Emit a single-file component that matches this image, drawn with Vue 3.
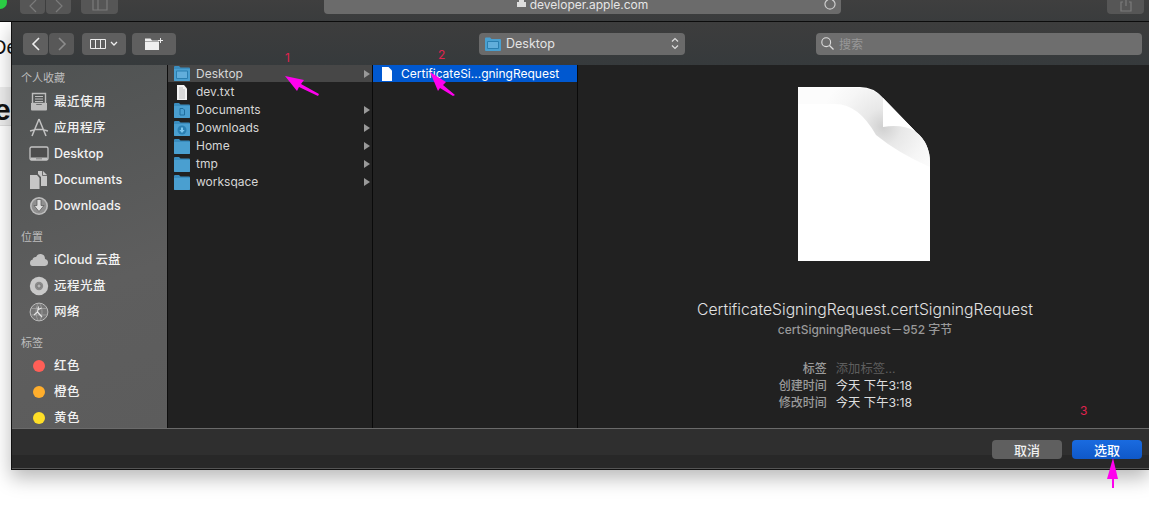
<script setup>
const favorites = [
  { icon: 'recent', label: '最近使用', cjk: true },
  { icon: 'apps', label: '应用程序', cjk: true },
  { icon: 'desktop', label: 'Desktop' },
  { icon: 'docs', label: 'Documents' },
  { icon: 'down', label: 'Downloads' },
]
const places = [
  { icon: 'cloud', label: 'iCloud 云盘' },
  { icon: 'disc', label: '远程光盘', cjk: true },
  { icon: 'net', label: '网络', cjk: true },
]
const tags = [
  { color: '#ff5f57', label: '红色' },
  { color: '#ffae2c', label: '橙色' },
  { color: '#ffdf27', label: '黄色' },
]
const files = [
  { name: 'Desktop', kind: 'desktop', more: true, active: true },
  { name: 'dev.txt', kind: 'txt' },
  { name: 'Documents', kind: 'doc', more: true },
  { name: 'Downloads', kind: 'down', more: true },
  { name: 'Home', kind: 'plain', more: true },
  { name: 'tmp', kind: 'plain', more: true },
  { name: 'worksqace', kind: 'plain', more: true },
]
const meta = [
  { key: '标签', value: '添加标签...', dim: true },
  { key: '创建时间', value: '今天 下午3:18' },
  { key: '修改时间', value: '今天 下午3:18' },
]
</script>

<template>
  <div class="screen">
    <!-- safari behind the sheet -->
    <header class="browser">
      <span class="dot"></span>
      <div class="b-group">
        <span class="b-btn"><svg width="10" height="14" viewBox="0 0 10 14"><path d="M8 0 2 6l6 6" class="glyph" /></svg></span>
        <span class="b-btn"><svg width="10" height="14" viewBox="0 0 10 14"><path d="m2 0 6 6-6 6" class="glyph" /></svg></span>
      </div>
      <span class="b-btn side"><svg width="16" height="14" viewBox="0 0 16 14"><path d="M1 0v10h14V0M6 0v10" class="glyph" /></svg></span>
      <div class="url">
        <svg width="9" height="10" viewBox="0 0 9 10"><path d="M0 4h9v5H0zM2 4V1h5v3" fill="#ddd" /></svg>
        <span>developer.apple.com</span>
        <svg class="reload" width="14" height="14" viewBox="0 0 14 14"><path d="M9 1.600a5 5 0 1 1-4 0" fill="none" stroke="#ccc" stroke-width="1.200" /></svg>
      </div>
      <span class="b-btn share"><svg width="12" height="14" viewBox="0 0 12 14"><path d="M3 2H1v9h10V2H9M6 0v6" class="glyph" /></svg></span>
    </header>

    <div class="stage">
      <div class="page-strip">
        <span class="page-a">De</span>
        <div class="page-band"><span>e</span></div>
      </div>

      <section class="dialog">
        <div class="toolbar">
          <div class="nav">
            <button class="tool back"><svg width="10" height="16" viewBox="0 0 10 16"><path d="M8 2 2 8l6 6" fill="none" stroke="#eee" stroke-width="1.600" /></svg></button>
            <button class="tool fwd"><svg width="10" height="16" viewBox="0 0 10 16"><path d="m2 2 6 6-6 6" fill="none" stroke="#8c8c8c" stroke-width="1.600" /></svg></button>
          </div>
          <button class="tool view">
            <svg width="16" height="10" viewBox="0 0 16 10"><path d="M.5.500h15v9H.5zM5.500.500v9M10.500.500v9" fill="none" stroke="#eee" /></svg>
            <svg width="8" height="5" viewBox="0 0 8 5"><path d="m1 1 3 3 3-3" fill="none" stroke="#eee" stroke-width="1.300" /></svg>
          </button>
          <button class="tool newdir">
            <svg width="18" height="12" viewBox="0 0 18 12">
              <path d="M0 .5h5.500l1.500 2h7V12H0z" fill="#eee" />
              <path d="M0 3.500h14" stroke="#8a8a8a" stroke-width=".7" />
              <path d="M15.500 0v5M13 2.500h5" stroke="#eee" fill="none" />
            </svg>
          </button>
          <div class="location">
            <svg class="folder" width="16" height="14" viewBox="0 0 16 14">
              <path d="M0 1.500Q0 .5 1 .5h4l1.500 1.500H15q1 0 1 1V13q0 1-1 1H1q-1 0-1-1z" fill="#4aa0d0" />
              <path d="M2.500 4.500h11v7h-11z" fill="#62aedb" stroke="#2b7fb0" />
            </svg>
            <span class="loc-name">Desktop</span>
            <svg class="updown" width="8" height="13" viewBox="0 0 8 13"><path d="m1 4.500 3-3 3 3M1 8.500l3 3 3-3" fill="none" stroke="#ddd" stroke-width="1.200" /></svg>
          </div>
          <div class="search">
            <svg width="13" height="13" viewBox="0 0 13 13"><circle cx="5.200" cy="5.200" r="4.400" fill="none" stroke="#ddd" stroke-width="1.100" /><path d="m8.500 8.500 4 4" stroke="#ddd" stroke-width="1.300" /></svg>
            <span>搜索</span>
          </div>
        </div>

        <div class="body">
          <aside class="sidebar">
            <h4>个人收藏</h4>
            <div v-for="item in favorites" :key="item.label" class="side-row" :class="{ cjk: item.cjk }">
              <span class="side-icon"><svg width="20" height="20" viewBox="0 0 20 20">
                <template v-if="item.icon === 'recent'">
                  <path d="M3.500 1.500h13v10h-13z" fill="none" stroke="#bdbdbd" stroke-width="1.400" />
                  <path d="M6 4.500h8M6 7h8M6 9.500h8" stroke="#bdbdbd" />
                  <path d="M2 11h4.500l1 2h5l1-2H18v6.500q0 1-1 1H3q-1 0-1-1z" fill="#bdbdbd" />
                </template>
                <template v-else-if="item.icon === 'apps'">
                  <path d="M10 1 3 18M10 1l7 17M5.500 11.500h9M1 13l4-1M19 13l-4-1" fill="none" stroke="#c2c2c2" stroke-width="1.500" />
                </template>
                <template v-else-if="item.icon === 'desktop'">
                  <rect x="1" y="3" width="18" height="13" rx="1.500" fill="#4d4d4d" stroke="#c4c4c4" stroke-width="1.300" />
                  <path d="M1.500 13.500h17V15q0 1-1 1h-15q-1 0-1-1z" fill="#c4c4c4" />
                  <path d="M7.500 14.800h1M9.500 14.800h1M11.500 14.800h1" stroke="#444" />
                </template>
                <template v-else-if="item.icon === 'docs'">
                  <path d="M1 5h7l2.500 3v11H1z" fill="#c6c6c6" />
                  <path d="M9 1h5l4 4v11h-6V7L9 4z" fill="#c6c6c6" />
                  <path d="M13.500 1v4.500H18" fill="none" stroke="#555" stroke-width=".8" />
                </template>
                <template v-else-if="item.icon === 'down'">
                  <circle cx="10" cy="10" r="9" fill="#bdbdbd" />
                  <circle cx="10" cy="10" r="7.400" fill="#8f8f8f" />
                  <path d="M8 3.500h4v6h3l-5 6-5-6h3z" fill="#dedede" stroke="#555" stroke-width=".7" />
                </template>
              </svg></span>
              <span>{{ item.label }}</span>
            </div>

            <h4 class="gap">位置</h4>
            <div v-for="item in places" :key="item.label" class="side-row" :class="{ cjk: item.cjk }">
              <span class="side-icon"><svg width="20" height="20" viewBox="0 0 20 20">
                <template v-if="item.icon === 'cloud'">
                  <path d="M3.500 16Q1 16 1 13q0-3 2.500-3.200Q4 6.800 7 7 8.500 3.500 12 4q4 .5 4 5 3 .5 3 3.500T16 16z" fill="#c2c2c2" />
                </template>
                <template v-else-if="item.icon === 'disc'">
                  <circle cx="10" cy="10" r="9.200" fill="#c9c9c9" />
                  <circle cx="10" cy="10" r="4.200" fill="#8a8a8a" />
                  <circle cx="10" cy="10" r="2" fill="#b5b5b5" stroke="#666" stroke-width=".6" />
                </template>
                <template v-else>
                  <circle cx="10" cy="10" r="8.900" fill="#757575" stroke="#bcbcbc" />
                  <path d="M10 1c-4 3-4 15 0 18M10 1c4 3 4 15 0 18M2 6.500h16M1.500 13h17" fill="none" stroke="#a8a8a8" stroke-width=".7" />
                  <path d="M9.500 4.500 8.500 10 5 13M8.500 10l4.500 5M8.500 8l4-2" fill="none" stroke="#e4e4e4" stroke-width="1.200" />
                </template>
              </svg></span>
              <span>{{ item.label }}</span>
            </div>

            <h4 class="gap">标签</h4>
            <div v-for="tag in tags" :key="tag.label" class="side-row cjk">
              <span class="side-icon"><i class="tag" :style="{ background: tag.color }"></i></span>
              <span>{{ tag.label }}</span>
            </div>
          </aside>

          <div class="column">
            <div v-for="f in files" :key="f.name" class="row" :class="{ hover: f.active }">
              <svg v-if="f.kind === 'txt'" class="row-icon" width="16" height="15" viewBox="0 0 16 15">
                <path d="M3 0h7l3 3.500V15H3z" fill="#f4f4f4" />
                <path d="M5 3h4M5 5h6M5 7h6M5 9h6M5 11h6M5 13h6" stroke="#9c9c9c" stroke-width=".6" />
              </svg>
              <svg v-else class="row-icon" width="16" height="15" viewBox="0 0 16 15">
                <path d="M0 1Q0 0 1 0h4l1.500 1.500H15q1 0 1 1V14q0 1-1 1H1q-1 0-1-1z" fill="#3a8dbf" />
                <path d="M0 3h16v11q0 1-1 1H1q-1 0-1-1z" fill="#4a9fd0" />
                <path v-if="f.kind === 'desktop'" d="M2.500 5h11v7.500h-11z" fill="#62aedb" stroke="#2b7fb0" />
                <path v-if="f.kind === 'doc'" d="M6 5.500h3l1.500 1.500v5H6z" fill="none" stroke="#1f6e9e" />
                <template v-if="f.kind === 'down'">
                  <circle cx="8" cy="9" r="4.500" fill="#2a7fb2" />
                  <path d="M7 6.500h2v2.500h1.700L8 12 5.300 9H7z" fill="#7cc6ee" />
                </template>
              </svg>
              <span class="row-name">{{ f.name }}</span>
              <i v-if="f.more" class="chev"></i>
            </div>
          </div>

          <div class="column">
            <div class="row selected">
              <svg class="row-icon small" width="10" height="14" viewBox="0 0 10 14"><path d="M0 0h6.500L10 3.500V14H0z" fill="#fff" /></svg>
              <span class="row-name">CertificateSi...gningRequest</span>
            </div>
          </div>

          <div class="preview">
            <svg class="doc" width="132" height="174" viewBox="0 0 132 174">
              <defs>
                <radialGradient id="curl" gradientUnits="userSpaceOnUse" cx="85" cy="40" r="62">
                  <stop offset="0" stop-color="#d0d0d0" />
                  <stop offset=".3" stop-color="#e8e8e8" />
                  <stop offset=".7" stop-color="#f6f6f6" />
                  <stop offset="1" stop-color="#fcfcfc" />
                </radialGradient>
              </defs>
              <path d="M0 0H62Q76 0 85 11L118 45Q132 56 132 76V174H0z" fill="#fff" />
              <path d="M0 1H62Q76 1 85 11L118 45Q132 56 132 76V80Q100 66 78 48 60 16 36 17H0z" fill="url(#curl)" />
              <path d="M85 11 117 44Q104 37 85 40z" fill="#fff" />
            </svg>
            <h2>CertificateSigningRequest.certSigningRequest</h2>
            <p class="kind">certSigningRequest－952 字节</p>
            <dl class="meta">
              <div v-for="m in meta" :key="m.key" class="meta-row">
                <dt>{{ m.key }}</dt>
                <dd :class="{ dim: m.dim }">{{ m.value }}</dd>
              </div>
            </dl>
          </div>
        </div>

        <footer class="actions">
          <button class="act">取消</button>
          <button class="act primary">选取</button>
        </footer>
      </section>
    </div>

    <!-- hand drawn annotations on the screenshot -->
    <svg class="marks" width="1149" height="513" viewBox="0 0 1149 513">
      <path d="M285 76 304 80 301 84 319 94 318 96 299 87 297 91z" fill="#ff00ee" />
      <path d="M430 72 446 82 443 85 455 95 453 96 440 88 438 91z" fill="#ff00ee" />
      <path d="M1113 458 1118 479H1114V488H1112V479H1107z" fill="#ff00ee" />
    </svg>
    <span class="num n1">1</span>
    <span class="num n2">2</span>
    <span class="num n3">3</span>
  </div>
</template>

<style scoped>
.screen {
  position: relative;
  width: 1149px;
  height: 513px;
  overflow: hidden;
  background: #fff;
  font-family: Inter, "Noto Sans CJK SC", sans-serif;
  font-size: 12px;
  display: flex;
  flex-direction: column;
}
button {
  font-family: inherit;
  padding: 0;
  border: none;
  display: flex;
  align-items: center;
  justify-content: center;
}

/* browser */
.browser {
  height: 21px;
  flex-shrink: 0;
  display: flex;
  align-items: flex-start;
  background: linear-gradient(#3f3f3f, #3a3c3d);
  border-bottom: 1px solid #0c0c0c;
  position: relative;
}
.dot {
  width: 14px;
  height: 14px;
  margin: -5px 0 0 -7px;
  border-radius: 50%;
  background: #2bcb44;
}
.b-group {
  display: flex;
  gap: 1px;
  margin-left: 13px;
}
.b-btn {
  width: 25px;
  height: 14px;
  background: #565656;
  border-radius: 0 0 4px 4px;
  display: flex;
  justify-content: center;
  overflow: hidden;
}
.side {
  width: 37px;
  margin-left: 10px;
}
.share {
  width: 37px;
  margin-left: 266px;
}
.glyph {
  fill: none;
  stroke: #7b7b7b;
  stroke-width: 1.200;
}
.url {
  width: 517px;
  height: 14px;
  margin-left: 206px;
  background: #6b6b6b;
  border-radius: 0 0 4px 4px;
  color: #e6e6e6;
  font-size: 12px;
  line-height: 9px;
  display: flex;
  justify-content: center;
  gap: 4px;
  position: relative;
}
.url svg:first-child {
  margin-top: -2px;
}
.reload {
  position: absolute;
  right: 4px;
  top: -2px;
}

/* page behind */
.stage {
  flex: 1;
  display: flex;
  align-items: flex-start;
  min-height: 0;
}
.page-strip {
  width: 11px;
  height: 448px;
  flex-shrink: 0;
  overflow: hidden;
  color: #111;
  font-family: "Liberation Sans", sans-serif;
}
.page-a {
  display: block;
  font-size: 20px;
  line-height: 24px;
  margin: 13px 0 0 -8px;
}
.page-band {
  height: 38px;
  margin-top: 28px;
  background: #ededed;
  border-bottom: 1px solid #ddd;
  font-size: 30px;
  font-weight: 700;
  line-height: 46px;
  text-indent: -6px;
}

/* dialog */
.dialog {
  flex: 1;
  height: 448px;
  box-sizing: border-box;
  display: flex;
  flex-direction: column;
  background: #222;
  border-left: 1px solid #111;
  border-bottom: 1px solid #111;
  box-shadow: 0 8px 18px rgba(0, 0, 0, .28);
  min-width: 0;
}
.toolbar {
  height: 43px;
  flex-shrink: 0;
  display: flex;
  align-items: center;
  padding-left: 11px;
  box-sizing: border-box;
  background: linear-gradient(#3d3d3d, #363a3c);
}
.nav {
  display: flex;
  gap: 1px;
}
.tool {
  height: 22px;
  background: #5f5f5f;
  border-radius: 4px;
}
.back,
.fwd {
  width: 25px;
}
.fwd {
  background: #585858;
}
.view {
  width: 44px;
  margin-left: 8px;
  gap: 4px;
}
.newdir {
  width: 44px;
  margin-left: 6px;
}
.location {
  width: 206px;
  height: 22px;
  margin-left: 303px;
  padding: 0 6px;
  box-sizing: border-box;
  background: #6a6a6a;
  border-radius: 4px;
  display: flex;
  align-items: center;
  gap: 5px;
  color: #e4e4e4;
  font-size: 12.500px;
  position: relative;
}
.loc-name {
  flex: 1;
}
.search {
  width: 326px;
  height: 22px;
  margin-left: 131px;
  padding-left: 5px;
  box-sizing: border-box;
  background: #6e6e6e;
  border-radius: 4px;
  display: flex;
  align-items: center;
  gap: 5px;
  color: #989898;
}
.body {
  flex: 1;
  display: flex;
  min-height: 0;
  overflow: hidden;
}

/* sidebar */
.sidebar {
  width: 156px;
  flex-shrink: 0;
  padding: 6px 0 0 10px;
  box-sizing: border-box;
  background: linear-gradient(160deg, #4f5252, #5e5e5e 60%, #5c5c5c);
  border-right: 1px solid #0e0e0e;
  color: #f2f2f2;
  overflow: hidden;
}
.sidebar h4 {
  margin: 0 0 3px -1px;
  height: 15px;
  line-height: 15px;
  font-size: 11px;
  font-weight: 400;
  color: #bdbdbd;
}
.sidebar h4.gap {
  margin-top: 11px;
  margin-bottom: 2px;
}
.side-row {
  height: 26px;
  display: flex;
  align-items: center;
  gap: 5px;
  font-size: 12.500px;
  font-weight: 500;
  line-height: 26px;
}
.side-row.cjk {
  letter-spacing: .5px;
}
.side-icon {
  width: 20px;
  height: 20px;
  margin-left: 7px;
  display: flex;
  align-items: center;
  justify-content: center;
}
.tag {
  width: 12px;
  height: 12px;
  border-radius: 50%;
}

/* columns */
.column {
  width: 205px;
  flex-shrink: 0;
  box-sizing: border-box;
  background: #212121;
  border-right: 1px solid #0a0a0a;
}
.row {
  height: 18px;
  display: flex;
  align-items: center;
  padding: 0 2px 0 6px;
  color: #d6d6d6;
  line-height: 18px;
}
.row.hover,
.row.selected {
  height: 17px;
  margin-bottom: 1px;
}
.row.hover {
  background: #474747;
}
.row.selected {
  background: #0058d0;
  color: #fff;
}
.row-icon {
  flex-shrink: 0;
}
.row-icon.small {
  margin-left: 3px;
}
.row-name {
  flex: 1;
  margin-left: 6px;
}
.selected .row-name {
  margin-left: 9px;
}
.chev {
  width: 0;
  height: 0;
  border-left: 6px solid #999;
  border-top: 4px solid transparent;
  border-bottom: 4px solid transparent;
}

/* preview */
.preview {
  flex: 1;
  display: flex;
  flex-direction: column;
  align-items: center;
  padding: 22px 0 0 3px;
  background: #212121;
  min-width: 0;
}
.doc {
  flex-shrink: 0;
  margin-left: -3px;
}
.preview h2 {
  margin: 39px 0 0;
  font-size: 15.700px;
  font-weight: 300;
  line-height: 20px;
  color: #e2e2e2;
  white-space: nowrap;
}
.kind {
  margin: 2px 0 0;
  font-size: 12px;
  font-weight: 500;
  line-height: 16px;
  color: #999;
}
.meta {
  margin: 22px 0 0 -47px;
  display: flex;
  flex-direction: column;
}
.meta-row {
  display: flex;
  gap: 9px;
  height: 17px;
  line-height: 17px;
}
.meta dt {
  width: 56px;
  text-align: right;
  color: #9b9b9b;
  font-weight: 500;
}
.meta dd {
  margin: 0;
  font-size: 12.300px;
  color: #dedede;
}
.meta dd.dim {
  color: #5e5e5e;
}

/* footer */
.actions {
  height: 41px;
  flex-shrink: 0;
  display: flex;
  justify-content: flex-end;
  align-items: flex-start;
  gap: 10px;
  padding: 11px 7px 0 0;
  box-sizing: border-box;
  background: linear-gradient(#2f2f2f 26px, #282828 26px);
  border-top: 1px solid #6a6a6a;
  border-bottom: 1px solid #555;
}
.act {
  width: 70px;
  height: 19px;
  border-radius: 4px;
  background: #5f5f5f;
  color: #f0f0f0;
  font-size: 13px;
  font-weight: 500;
}
.primary {
  background: linear-gradient(#1a6be0, #0f58c8);
  color: #fff;
}

/* annotations */
.marks {
  position: absolute;
  left: 0;
  top: 0;
  pointer-events: none;
}
.num {
  position: absolute;
  font-size: 12px;
  line-height: 14px;
  color: #e0234f;
}
.n1 {
  left: 285px;
  top: 51px;
}
.n2 {
  left: 438px;
  top: 48px;
}
.n3 {
  left: 1080px;
  top: 404px;
}
</style>
